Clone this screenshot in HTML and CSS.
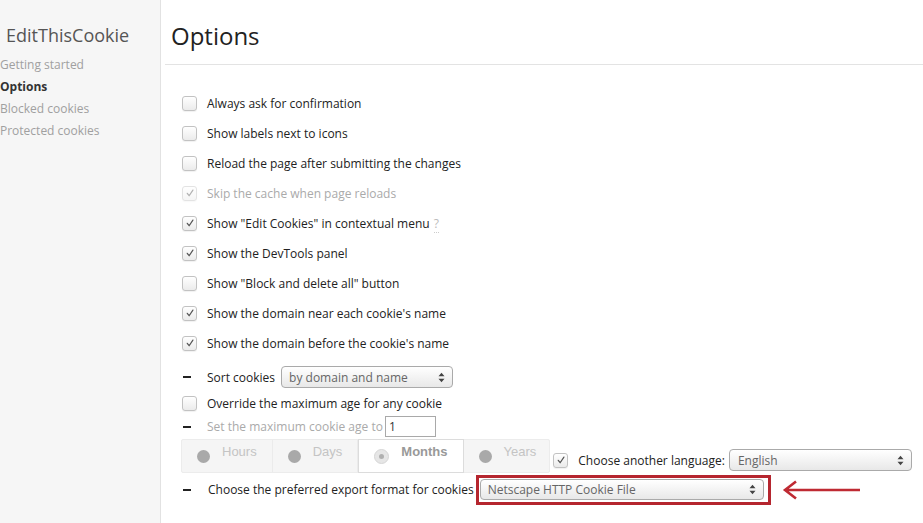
FILE: index.html
```html
<!DOCTYPE html>
<html>
<head>
<meta charset="utf-8">
<title>EditThisCookie - Options</title>
<link rel="stylesheet" href="styles.css">
</head>
<body>
<div class="app">
  <aside class="sidebar">
    <div class="brand">EditThisCookie</div>
    <nav class="nav">
      <a class="nav-item">Getting started</a>
      <a class="nav-item active">Options</a>
      <a class="nav-item">Blocked cookies</a>
      <a class="nav-item">Protected cookies</a>
    </nav>
  </aside>
  <main class="main">
    <header class="page-head"><h1>Options</h1></header>
    <div class="options">
      <div class="row"><span class="lead"><span class="cb"></span></span><span class="label">Always ask for confirmation</span></div>
      <div class="row"><span class="lead"><span class="cb"></span></span><span class="label">Show labels next to icons</span></div>
      <div class="row"><span class="lead"><span class="cb"></span></span><span class="label">Reload the page after submitting the changes</span></div>
      <div class="row disabled"><span class="lead"><span class="cb checked"><svg viewBox="0 0 14 14"><path d="M3.8 7.4 L6 10.2 L10.4 3.6"/></svg></span></span><span class="label">Skip the cache when page reloads</span></div>
      <div class="row"><span class="lead"><span class="cb checked"><svg viewBox="0 0 14 14"><path d="M3.8 7.4 L6 10.2 L10.4 3.6"/></svg></span></span><span class="label">Show "Edit Cookies" in contextual menu <span class="help">?</span></span></div>
      <div class="row"><span class="lead"><span class="cb checked"><svg viewBox="0 0 14 14"><path d="M3.8 7.4 L6 10.2 L10.4 3.6"/></svg></span></span><span class="label">Show the DevTools panel</span></div>
      <div class="row"><span class="lead"><span class="cb"></span></span><span class="label">Show "Block and delete all" button</span></div>
      <div class="row"><span class="lead"><span class="cb checked"><svg viewBox="0 0 14 14"><path d="M3.8 7.4 L6 10.2 L10.4 3.6"/></svg></span></span><span class="label">Show the domain near each cookie's name</span></div>
      <div class="row"><span class="lead"><span class="cb checked"><svg viewBox="0 0 14 14"><path d="M3.8 7.4 L6 10.2 L10.4 3.6"/></svg></span></span><span class="label">Show the domain before the cookie's name</span></div>

      <div class="row row-sort"><span class="lead"><span class="dash"></span></span><span class="label">Sort cookies</span>
        <div class="select select-sort"><span class="select-text">by domain and name</span><svg class="select-arrow" viewBox="0 0 7 11"><path d="M0.5 4.3 L3.5 0.8 L6.5 4.3 Z M0.5 6.7 L3.5 10.2 L6.5 6.7 Z"/></svg></div>
      </div>
      <div class="row row-override"><span class="lead"><span class="cb"></span></span><span class="label">Override the maximum age for any cookie</span></div>
      <div class="row row-age disabled-text"><span class="lead"><span class="dash"></span></span><span class="label">Set the maximum cookie age to</span><span class="num-input">1</span></div>

      <div class="row row-units">
        <div class="units">
          <div class="unit"><span class="radio"></span><span class="unit-text">Hours</span></div>
          <div class="unit"><span class="radio"></span><span class="unit-text">Days</span></div>
          <div class="unit active"><span class="radio"><span class="radio-dot"></span></span><span class="unit-text">Months</span></div>
          <div class="unit last"><span class="radio"></span><span class="unit-text">Years</span></div>
        </div>
        <div class="lang">
          <span class="cb checked"><svg viewBox="0 0 14 14"><path d="M3.8 7.4 L6 10.2 L10.4 3.6"/></svg></span>
          <span class="label lang-label">Choose another language:</span>
          <div class="select select-lang"><span class="select-text">English</span><svg class="select-arrow" viewBox="0 0 7 11"><path d="M0.5 4.3 L3.5 0.8 L6.5 4.3 Z M0.5 6.7 L3.5 10.2 L6.5 6.7 Z"/></svg></div>
        </div>
      </div>

      <div class="row row-export"><span class="lead"><span class="dash"></span></span><span class="label export-label">Choose the preferred export format for cookies</span>
        <div class="highlight">
          <div class="select select-export"><span class="select-text">Netscape HTTP Cookie File</span><svg class="select-arrow" viewBox="0 0 7 11"><path d="M0.5 4.3 L3.5 0.8 L6.5 4.3 Z M0.5 6.7 L3.5 10.2 L6.5 6.7 Z"/></svg></div>
        </div>
        <svg class="pointer" viewBox="0 0 80 22" width="80" height="22"><path d="M3 11 L78 11 M14 2.5 L3 11 L14 19.5"/></svg>
      </div>
    </div>
  </main>
</div>
</body>
</html>
```
FILE: styles.css
```css
* { box-sizing: border-box; }
html, body { margin: 0; height: 100%; }
body {
  font-family: "Open Sans", "Liberation Sans", sans-serif;
  font-size: 12px;
  color: #222;
  background: #fff;
}
.app { display: flex; height: 100vh; overflow: hidden; }

/* Sidebar */
.sidebar {
  width: 161px;
  flex: none;
  background: #f6f6f6;
  border-right: 1px solid #e2e2e2;
  padding-top: 23px;
}
.brand {
  font-size: 18px;
  line-height: 24px;
  color: #555;
  padding-left: 6px;
}
.nav { margin-top: 7px; display: flex; flex-direction: column; }
.nav-item {
  line-height: 22px;
  color: #a0a0a0;
  font-size: 12px;
}
.nav-item.active { color: #333; font-weight: 700; }

/* Main */
.main { flex: 1; min-width: 0; }
.page-head {
  margin-left: 4px;
  border-bottom: 1px solid #e3e3e3;
  padding: 19px 0 12px 6px;
}
.page-head h1 {
  margin: 0;
  font-size: 24px;
  font-weight: 400;
  line-height: 33px;
  color: #222;
}
.options { margin: 23px 0 0 20px; display: flex; flex-direction: column; }
.row { display: flex; align-items: center; height: 30px; }
.lead { width: 26px; flex: none; display: flex; align-items: center; }
.lead .cb { margin-left: 1px; }
.label { white-space: nowrap; }

.cb {
  width: 15px;
  height: 15px;
  flex: none;
  border: 1px solid #c2c2c2;
  border-radius: 3px;
  background: linear-gradient(#ffffff, #ebebeb);
  box-shadow: 0 1px 1px rgba(0,0,0,0.06);
  display: inline-flex;
  align-items: center;
  justify-content: center;
}
.cb svg { width: 12px; height: 12px; fill: none; stroke: #555; stroke-width: 1.4; stroke-linecap: round; stroke-linejoin: round; }
.disabled .cb { opacity: 0.45; }
.disabled .label { color: #aaa; }
.help { color: #bbb; border-bottom: 1px dotted #ccc; margin-left: 1px; }

.dash { width: 8px; height: 2px; background: #222; margin-left: 2px; }

/* Selects */
.select {
  display: flex;
  align-items: center;
  justify-content: space-between;
  height: 22px;
  border: 1px solid #aaa;
  border-radius: 4px;
  background: linear-gradient(#ffffff, #e8e8e8);
  padding: 0 7px 0 7px;
  color: #666;
}
.select-arrow { width: 7px; height: 11px; fill: #444; flex: none; }
.select-sort { width: 172px; margin-left: 6px; }
.row-sort { margin-top: 4px; }
.row-override { height: 22px; }
.row-age { height: 25px; }
.disabled-text .label { color: #aaa; }
.num-input {
  width: 51px;
  height: 21px;
  margin-left: 2px;
  border: 1px solid #a9a9a9;
  padding: 0 3px;
  line-height: 19px;
  color: #333;
  background: #fff;
}

/* Units segmented control */
.row-units { height: 34px; align-items: flex-end; }
.units {
  display: flex;
  height: 34px;
  border: 1px solid #ececec;
  background: #f5f5f5;
  border-radius: 2px;
  font-family: "Liberation Sans", Arial, sans-serif;
  font-size: 13px;
  color: #c4c4c4;
}
.unit {
  display: flex;
  align-items: center;
  gap: 12px;
  padding: 0 15px 0 15px;
  border-right: 1px solid #ebebeb;
}
.unit.last { border-right: none; padding-right: 13px; }
.unit.active {
  background: #fff;
  border: 1px solid #dcdcdc;
  margin: -1px 0;
  color: #999;
  font-weight: 700;
}
.unit-text { margin-bottom: 9px; }
.radio {
  width: 13px;
  height: 13px;
  border-radius: 50%;
  background: #a9a9a9;
  flex: none;
  display: flex;
  align-items: center;
  justify-content: center;
}
.unit.active .radio { width: 15px; height: 15px; background: #e6e6e6; border: 1px solid #d6d6d6; }
.radio-dot { width: 5px; height: 5px; border-radius: 50%; background: #b0b0b0; }

.lang { display: flex; align-items: center; margin: 0 0 2px 3px; }
.lang-label { margin-left: 10px; }
.select-lang { width: 183px; margin-left: 4px; padding-left: 8px; }

/* Export */
.row-export { height: 33px; }
.export-label { margin-left: 1px; }
.highlight {
  margin-left: 2px;
  border: 3px solid #b5262f;
  padding: 1px 4px 2px 1px;
}
.select-export { width: 284px; height: 21px; }
.pointer { margin-left: 11px; fill: none; stroke: #bf2a33; stroke-width: 2.6; stroke-linecap: butt; stroke-linejoin: miter; }
```
